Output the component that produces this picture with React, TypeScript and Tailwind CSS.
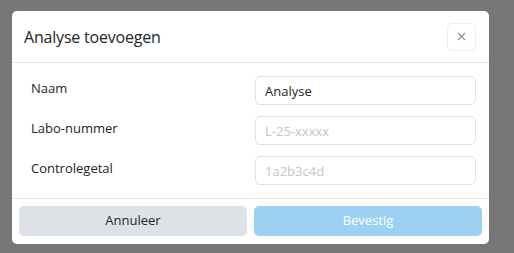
import React from "react";

const fields = [
  { label: "Naam", value: "Analyse", placeholder: "" },
  { label: "Labo-nummer", value: "", placeholder: "L-25-xxxxx" },
  { label: "Controlegetal", value: "", placeholder: "1a2b3c4d" },
];

export default function App() {
  return (
    <div
      className="w-[514px] h-[253px] bg-[#777777] pt-[11px] pl-[12px]"
      style={{ fontFamily: '"Open Sans", "Noto Sans", sans-serif' }}
    >
      <div className="w-[477px] h-[233px] bg-white rounded-[5px] flex flex-col overflow-hidden">
        {/* header */}
        <div className="h-[52px] flex items-center justify-between pl-[12px] pr-[13px] border-b border-[#e3e5e8]">
          <h5 className="text-[16px] text-[#212529] tracking-[-0.2px]">Analyse toevoegen</h5>
          <button className="w-[29px] h-[28px] rounded-[5px] border border-[#eceef0] flex items-center justify-center text-[#8a8a8a]">
            <svg width="9" height="9" viewBox="0 0 10 10" stroke="currentColor" strokeWidth="1.4">
              <path d="M1 1L9 9M9 1L1 9" />
            </svg>
          </button>
        </div>

        {/* body */}
        <div className="flex flex-col gap-[11px] pt-[13px] pb-[13px] pl-[19px] pr-[13px] border-b border-[#e3e5e8]">
          {fields.map((f) => (
            <div key={f.label} className="flex items-center justify-between h-[29px]">
              <label className="text-[13px] text-[#212529] -mt-[3px]">{f.label}</label>
              <input
                readOnly
                value={f.value}
                placeholder={f.placeholder}
                className="w-[221px] h-[29px] rounded-[5px] border border-[#dee2e6] px-[9px] text-[13px] text-[#212529] placeholder:text-[#c4c6c8] outline-none"
              />
            </div>
          ))}
        </div>

        {/* footer */}
        <div className="flex gap-[7px] p-[7px]">
          <button className="flex-1 h-[30px] rounded-[5px] bg-[#dee2e6] text-[13px] text-[#212529]">
            Annuleer
          </button>
          <button className="flex-1 h-[30px] rounded-[5px] bg-[#9dd1f1] text-[13px] text-white">
            Bevestig
          </button>
        </div>
      </div>
    </div>
  );
}
